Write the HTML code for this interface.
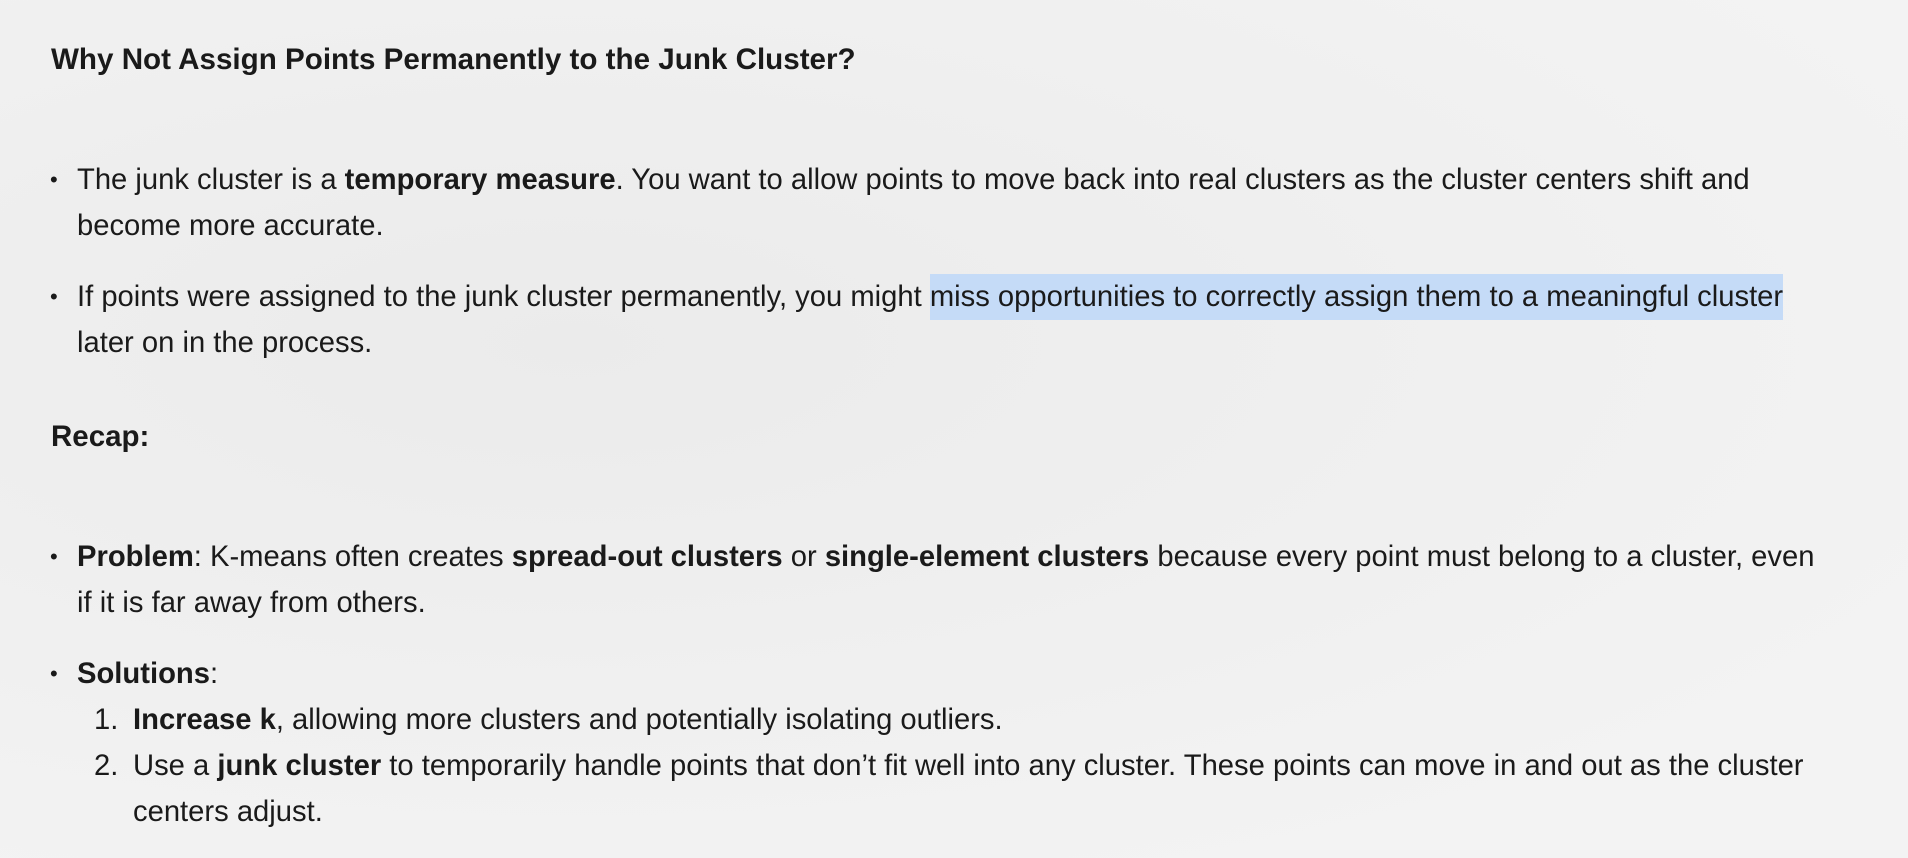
<!DOCTYPE html>
<html><head><meta charset="utf-8"><style>
html,body{margin:0;padding:0}
body{width:1908px;height:858px;overflow:hidden;position:relative;
background:radial-gradient(ellipse at 30% 40%,#ebebeb 0%,#efefef 40%,#f3f3f3 80%);
font-family:"Liberation Sans",Arial,sans-serif;color:#1a1a1a;font-size:29.2px}
.l{position:absolute;white-space:nowrap;line-height:46px;height:46px}
.h{font-weight:bold;font-size:29.6px}
.r{font-weight:bold;font-size:29.5px}
.b{position:absolute;left:50px;font-size:22px;line-height:46px}
.hl{background:#c5dbf7;padding:7px 0 7px 0}
b{font-weight:bold}
</style></head><body>
<div class="l h" style="left:51px;top:37px">Why Not Assign Points Permanently to the Junk Cluster?</div>

<div class="b" style="top:157px">•</div>
<div class="l" style="left:77px;top:157px">The junk cluster is a <b>temporary measure</b>. You want to allow points to move back into real clusters as the cluster centers shift and</div>
<div class="l" style="left:77px;top:203px">become more accurate.</div>

<div class="b" style="top:274px">•</div>
<div class="l" style="left:77px;top:274px">If points were assigned to the junk cluster permanently, you might <span class="hl">miss opportunities to correctly assign them to a meaningful cluster</span></div>
<div class="l" style="left:77px;top:320px">later on in the process.</div>

<div class="l r" style="left:51px;top:414px">Recap:</div>

<div class="b" style="top:534px">•</div>
<div class="l" style="left:77px;top:534px"><b>Problem</b>: K-means often creates <b>spread-out clusters</b> or <b>single-element clusters</b> because every point must belong to a cluster, even</div>
<div class="l" style="left:77px;top:580px">if it is far away from others.</div>

<div class="b" style="top:651px">•</div>
<div class="l" style="left:77px;top:651px"><b>Solutions</b>:</div>
<div class="l" style="left:94px;top:697px">1.</div>
<div class="l" style="left:133px;top:697px"><b>Increase k</b>, allowing more clusters and potentially isolating outliers.</div>
<div class="l" style="left:94px;top:743px">2.</div>
<div class="l" style="left:133px;top:743px">Use a <b>junk cluster</b> to temporarily handle points that don’t fit well into any cluster. These points can move in and out as the cluster</div>
<div class="l" style="left:133px;top:789px">centers adjust.</div>
</body></html>
